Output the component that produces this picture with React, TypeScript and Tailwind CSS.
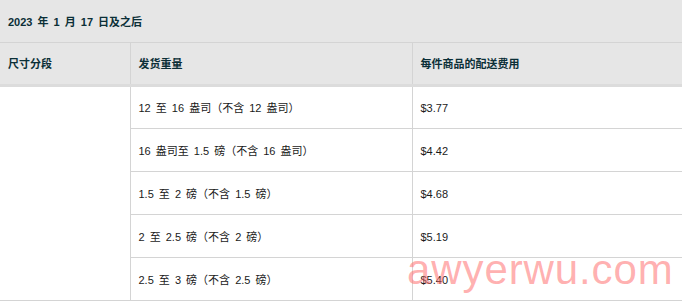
import React from "react";

const rows = [
  ["12 至 16 盎司（不含 12 盎司）", "$3.77"],
  ["16 盎司至 1.5 磅（不含 16 盎司）", "$4.42"],
  ["1.5 至 2 磅（不含 1.5 磅）", "$4.68"],
  ["2 至 2.5 磅（不含 2 磅）", "$5.19"],
  ["2.5 至 3 磅（不含 2.5 磅）", "$5.40"],
];

export default function App() {
  return (
    <div
      className="relative w-[682px] h-[301px] overflow-hidden bg-white"
      style={{ fontFamily: '"Liberation Sans", Arial, "Noto Sans CJK SC", sans-serif' }}
    >
      <table className="border-collapse w-[682px] table-fixed text-[11px] leading-[14px] [word-spacing:2px]">
        <colgroup>
          <col className="w-[130px]" />
          <col className="w-[282px]" />
          <col className="w-[270px]" />
        </colgroup>
        <thead>
          <tr className="h-[42px] bg-[#e6e6e6]">
            <th
              colSpan={3}
              className="border border-[#d4d4d4] border-l-0 border-t-0 px-2 pt-[2px] text-left font-bold text-[#0b2f37] whitespace-pre"
            >
              2023 年 1 月 17 日及之后
            </th>
          </tr>
          <tr className="h-[43px] bg-[#e6e6e6]">
            <th className="border border-[#d4d4d4] border-l-0 px-2 pt-[2px] text-left font-bold text-[#0b2f37]">尺寸分段</th>
            <th className="border border-[#d4d4d4] px-2 pt-[2px] text-left font-bold text-[#0b2f37]">发货重量</th>
            <th className="border border-[#d4d4d4] px-2 pt-[2px] text-left font-bold text-[#0b2f37]">每件商品的配送费用</th>
          </tr>
        </thead>
        <tbody>
          {rows.map(([w, p], i) => (
            <tr key={i} className="h-[43px]">
              {i === 0 && (
                <td rowSpan={5} className="border border-[#d4d4d4] border-l-0 border-t-[3px] border-t-[#dcdcdc]" />
              )}
              <td
                className={
                  i === 0
                    ? "border border-[#d4d4d4] px-2 pt-[2px] text-[#1a1a1a] whitespace-pre border-t-[3px] border-t-[#dcdcdc]"
                    : "border border-[#d4d4d4] px-2 pt-[2px] text-[#1a1a1a] whitespace-pre"
                }
              >
                {w}
              </td>
              <td
                className={
                  i === 0
                    ? "border border-[#d4d4d4] px-2 pt-[2px] text-[#1a1a1a] border-t-[3px] border-t-[#dcdcdc]"
                    : "border border-[#d4d4d4] px-2 pt-[2px] text-[#1a1a1a]"
                }
              >
                {p}
              </td>
            </tr>
          ))}
        </tbody>
      </table>
      <div
        className="absolute left-[407px] top-[249px] text-[42px] leading-[42px] tracking-[0.9px] text-[rgba(255,110,110,0.55)] select-none"
        style={{ fontFamily: '"Liberation Sans", Arial, sans-serif' }}
      >
        awyerwu.com
      </div>
    </div>
  );
}
